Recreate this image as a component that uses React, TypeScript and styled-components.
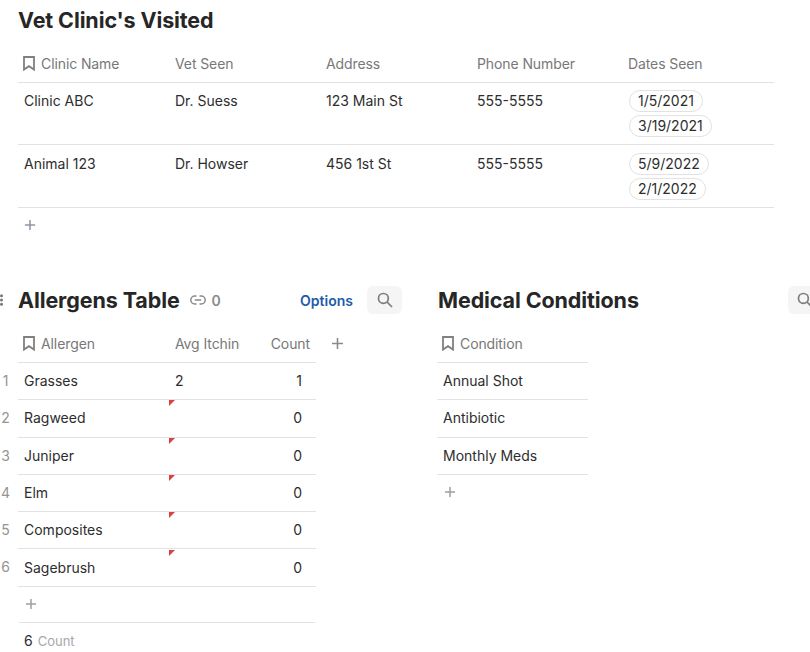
import * as React from "react";
import styled, { createGlobalStyle } from "styled-components";

const GlobalStyle = createGlobalStyle`
  html, body {
    margin: 0;
    padding: 0;
    background: #fff;
  }
  body {
    font-family: Inter, "Liberation Sans", sans-serif;
    color: #262626;
    width: 810px;
    height: 652px;
    overflow: hidden;
  }
`;

const Page = styled.div`
  width: 810px;
  height: 652px;
  overflow: hidden;
  padding: 5px 0 0 18px;
  box-sizing: border-box;
`;

const VetSection = styled.section`
  width: 756px;
  height: 277px;
`;

const Title = styled.h2<{ $inset?: number }>`
  margin: 0 0 0 ${(p) => p.$inset ?? 0}px;
  font-size: 21.5px;
  line-height: 30px;
  font-weight: 650;
  letter-spacing: -0.1px;
  color: #262626;
  white-space: nowrap;
`;

const HeaderRow = styled.div<{ $columns: string; $top: number }>`
  display: grid;
  grid-template-columns: ${(p) => p.$columns};
  height: 38px;
  margin-top: ${(p) => p.$top}px;
  border-bottom: 1px solid #e2e2e2;
`;

const HeaderCell = styled.div<{ $right?: boolean }>`
  display: flex;
  align-items: center;
  gap: 6px;
  min-width: 0;
  overflow: hidden;
  padding-left: 6px;
  padding-right: ${(p) => (p.$right ? "6px" : "0")};
  justify-content: ${(p) => (p.$right ? "flex-end" : "flex-start")};
  font-size: 14px;
  letter-spacing: -0.1px;
  color: #787878;
  white-space: nowrap;
`;

const ClipLabel = styled.span`
  display: block;
  overflow: hidden;
  width: 65px;
  flex: none;
`;

const BookmarkIcon = styled.svg`
  width: 12px;
  height: 15px;
  margin-left: -1px;
  flex: none;
`;

const Row = styled.div<{ $columns: string; $height: number; $shift?: number }>`
  display: grid;
  grid-template-columns: ${(p) => p.$columns};
  height: ${(p) => p.$height}px;
  padding-top: ${(p) => p.$shift ?? 0}px;
  border-bottom: 1px solid #e2e2e2;
  position: relative;
`;

const Cell = styled.div<{ $right?: boolean }>`
  position: relative;
  padding: 9px ${(p) => (p.$right ? "14px" : "0")} 0 6px;
  font-size: 14px;
  line-height: 17px;
  color: #2d2d2d;
  text-align: ${(p) => (p.$right ? "right" : "left")};
  white-space: nowrap;
`;

const DateCell = styled(Cell)`
  padding-top: 7px;
  display: flex;
  flex-direction: column;
  align-items: flex-start;
  gap: 3px;
`;

const DatePill = styled.span`
  display: block;
  height: 20px;
  line-height: 20px;
  padding: 0 8px;
  border: 1px solid #e2e2e2;
  border-radius: 11px;
  font-size: 14px;
  margin-left: 1px;
`;

const AddRow = styled.div<{ $height: number; $line?: boolean; $x?: number; $warm?: boolean }>`
  height: ${(p) => p.$height}px;
  display: flex;
  align-items: center;
  margin: 0 ${(p) => (p.$line ? "1px" : "0")};
  padding-left: ${(p) => (p.$x ?? 6) - (p.$line ? 1 : 0)}px;
  padding-bottom: ${(p) => (p.$line ? "2px" : "0")};
  border-bottom: ${(p) => (p.$line ? "1px solid #e2e2e2" : "none")};
  color: ${(p) => (p.$warm ? "#a39e99" : "#8c96a3")};
`;

const LowerArea = styled.div`
  display: flex;
  align-items: flex-start;
`;

const AllergenColumn = styled.section`
  width: 384px;
  margin-right: 35px;
  flex: none;
`;

const ConditionColumn = styled.section`
  flex: none;
  width: 400px;
`;

const TitleBar = styled.div`
  position: relative;
  display: flex;
  align-items: center;
  height: 36px;
`;

const GripIcon = styled.svg`
  position: absolute;
  left: -18px;
  top: 12px;
  width: 4px;
  height: 12px;
`;

const LinkCount = styled.span`
  display: flex;
  align-items: center;
  gap: 6px;
  margin-left: 10px;
  font-size: 14px;
  font-weight: 600;
  color: #8a8a8a;
`;

const OptionsLink = styled.a`
  margin-left: auto;
  font-size: 14px;
  font-weight: 600;
  color: #1d5bab;
`;

const SearchButton = styled.button<{ $left?: number }>`
  width: 35px;
  height: 28px;
  flex: none;
  margin-left: ${(p) => p.$left ?? 14}px;
  border: none;
  border-radius: 6px;
  background: #f5f5f5;
  display: flex;
  align-items: center;
  justify-content: center;
  padding: 0;
  color: #7d7d7d;
`;

const AllergenBody = styled.div`
  position: relative;
  width: 298px;
`;

const ConditionBody = styled.div`
  width: 151px;
`;

const RowNumber = styled.span`
  position: absolute;
  left: -18px;
  top: 9px;
  width: 11px;
  text-align: center;
  font-size: 14px;
  line-height: 17px;
  color: #979390;
`;

const ErrorFlag = styled.i`
  position: absolute;
  left: 0;
  top: 0;
  width: 0;
  height: 0;
  border-top: 6px solid #d9413d;
  border-right: 6px solid transparent;
`;

const HeaderAdd = styled.span`
  position: absolute;
  left: 313px;
  top: 0;
  height: 38px;
  display: flex;
  align-items: center;
  color: #8a8a8a;
`;

const CountFooter = styled.div`
  display: flex;
  align-items: baseline;
  gap: 5px;
  height: 30px;
  padding: 9px 0 0 6px;
  box-sizing: border-box;
  font-size: 14px;
  line-height: 17px;
  color: #2d2d2d;
`;

const CountLabel = styled.span`
  font-size: 13px;
  color: #a8a8a8;
`;

const Plus = ({ size = 12, width = 1.6 }: { size?: number; width?: number }) => (
  <svg width={size} height={size} viewBox="0 0 13 13" fill="none" stroke="currentColor" strokeWidth={width}>
    <path d="M6.5 1v11M1 6.5h11" />
  </svg>
);

const Bookmark = () => (
  <BookmarkIcon viewBox="0 0 12 15" fill="none" stroke="#808080" strokeWidth="1.8">
    <path d="M1 1h10v12.6L6 10.2 1 13.6z" />
  </BookmarkIcon>
);

const SearchGlyph = () => (
  <svg width="16" height="16" viewBox="0 0 16 16" fill="none" stroke="currentColor" strokeWidth="1.7">
    <circle cx="6.4" cy="6.4" r="4.9" />
    <path d="M10 10l5 5" />
  </svg>
);

const vetColumns = "151px 151px 151px 151px 152px";
const allergenColumns = "151px 96px 51px";
const conditionColumns = "151px";

const vets = [
  { name: "Clinic ABC", vet: "Dr. Suess", address: "123 Main St", phone: "555-5555", dates: ["1/5/2021", "3/19/2021"], shift: 0 },
  { name: "Animal 123", vet: "Dr. Howser", address: "456 1st St", phone: "555-5555", dates: ["5/9/2022", "2/1/2022"], shift: 1 },
];

const allergens = [
  { name: "Grasses", avg: "2", count: 1, height: 36, shift: 0 },
  { name: "Ragweed", avg: "", count: 0, height: 37, shift: 0 },
  { name: "Juniper", avg: "", count: 0, height: 36, shift: 0 },
  { name: "Elm", avg: "", count: 0, height: 36, shift: 0 },
  { name: "Composites", avg: "", count: 0, height: 36, shift: 0 },
  { name: "Sagebrush", avg: "", count: 0, height: 36, shift: 1 },
];

const conditions = [
  { name: "Annual Shot", height: 36 },
  { name: "Antibiotic", height: 37 },
  { name: "Monthly Meds", height: 36 },
];

const App = () => {
  return (
    <Page>
      <GlobalStyle />
      <VetSection>
        <Title>Vet Clinic's Visited</Title>
        <HeaderRow $columns={vetColumns} $top={9}>
          <HeaderCell>
            <Bookmark />
            Clinic Name
          </HeaderCell>
          <HeaderCell>Vet Seen</HeaderCell>
          <HeaderCell>Address</HeaderCell>
          <HeaderCell>Phone Number</HeaderCell>
          <HeaderCell>Dates Seen</HeaderCell>
        </HeaderRow>
        {vets.map((v) => (
          <Row key={v.name} $columns={vetColumns} $height={61} $shift={v.shift}>
            <Cell>{v.name}</Cell>
            <Cell>{v.vet}</Cell>
            <Cell>{v.address}</Cell>
            <Cell>{v.phone}</Cell>
            <DateCell>
              {v.dates.map((d) => (
                <DatePill key={d}>{d}</DatePill>
              ))}
            </DateCell>
          </Row>
        ))}
        <AddRow $height={34}>
          <Plus />
        </AddRow>
      </VetSection>

      <LowerArea>
        <AllergenColumn>
          <TitleBar>
            <GripIcon viewBox="0 0 4 12" fill="#777">
              <circle cx="1.5" cy="1.8" r="1.5" />
              <circle cx="1.5" cy="6" r="1.5" />
              <circle cx="1.5" cy="10.2" r="1.5" />
            </GripIcon>
            <Title>Allergens Table</Title>
            <LinkCount>
              <svg width="16" height="10" viewBox="0 0 16 10" fill="none" stroke="#8a8a8a" strokeWidth="1.5">
                <path d="M6.5 1H4.8a4 4 0 000 8h1.7M9.5 1h1.7a4 4 0 010 8H9.5M4.8 5h6.4" />
              </svg>
              0
            </LinkCount>
            <OptionsLink>Options</OptionsLink>
            <SearchButton $left={14}>
              <SearchGlyph />
            </SearchButton>
          </TitleBar>
          <AllergenBody>
            <HeaderRow $columns={allergenColumns} $top={6}>
              <HeaderCell>
                <Bookmark />
                Allergen
              </HeaderCell>
              <HeaderCell>
                <ClipLabel>Avg Itching</ClipLabel>
              </HeaderCell>
              <HeaderCell $right>Count</HeaderCell>
            </HeaderRow>
            <HeaderAdd>
              <Plus size={13} />
            </HeaderAdd>
            {allergens.map((a, i) => (
              <Row key={a.name} $columns={allergenColumns} $height={a.height} $shift={a.shift}>
                <RowNumber>{i + 1}</RowNumber>
                <Cell>{a.name}</Cell>
                <Cell>
                  {a.avg}
                  {i > 0 && <ErrorFlag />}
                </Cell>
                <Cell $right>{a.count}</Cell>
              </Row>
            ))}
            <AddRow $height={33} $line $x={7} $warm>
              <Plus />
            </AddRow>
            <CountFooter>
              6 <CountLabel>Count</CountLabel>
            </CountFooter>
          </AllergenBody>
        </AllergenColumn>

        <ConditionColumn>
          <TitleBar>
            <Title $inset={1}>Medical Conditions</Title>
            <SearchButton $left={149}>
              <SearchGlyph />
            </SearchButton>
          </TitleBar>
          <ConditionBody>
            <HeaderRow $columns={conditionColumns} $top={6}>
              <HeaderCell>
                <Bookmark />
                Condition
              </HeaderCell>
            </HeaderRow>
            {conditions.map((c) => (
              <Row key={c.name} $columns={conditionColumns} $height={c.height}>
                <Cell>{c.name}</Cell>
              </Row>
            ))}
            <AddRow $height={34} $x={7} $warm>
              <Plus />
            </AddRow>
          </ConditionBody>
        </ConditionColumn>
      </LowerArea>
    </Page>
  );
};

export default App;
